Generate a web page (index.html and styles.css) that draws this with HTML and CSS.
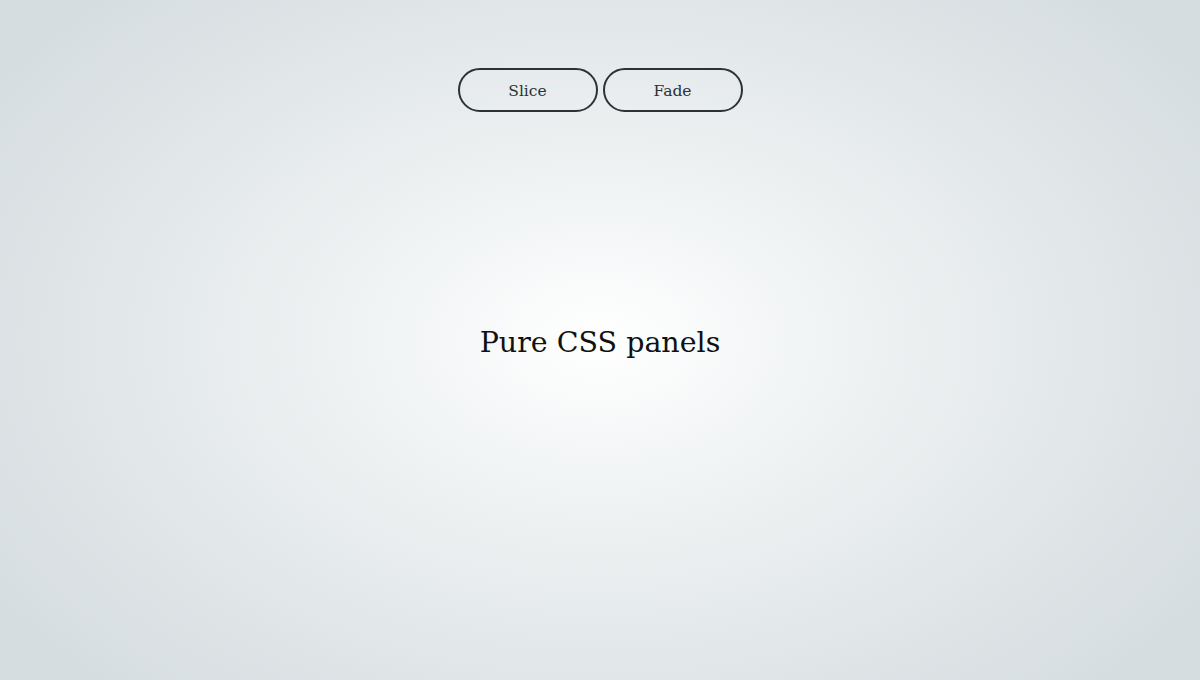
FILE: index.html
```html
<!DOCTYPE html>
<html lang="en">
<head>
<meta charset="utf-8">
<title>Pure CSS panels</title>
<link rel="stylesheet" href="styles.css">
</head>
<body>
<div class="page">
  <nav class="tabs">
    <button class="tab">Slice</button>
    <button class="tab">Fade</button>
  </nav>
  <main class="stage">
    <h1 class="title">Pure CSS panels</h1>
  </main>
</div>
</body>
</html>
```
FILE: styles.css
```css
html, body {
  margin: 0;
  padding: 0;
  height: 100%;
}
body {
  background: radial-gradient(ellipse 60% 70% at 50% 50%, #ffffff 0%, #f1f4f5 30%, #e3e8ea 65%, #d6dde0 100%);
  background-color: #dde3e6;
  font-family: "DejaVu Serif", "Liberation Serif", serif;
  color: #1d2427;
}
.page {
  width: 1200px;
  height: 680px;
  display: flex;
  flex-direction: column;
  align-items: center;
}
.tabs {
  display: flex;
  gap: 5px;
  margin-top: 68px;
}
.tab {
  width: 140px;
  height: 44px;
  border: 2px solid #2b3336;
  border-radius: 22px;
  background: transparent;
  font-family: "DejaVu Serif", "Liberation Serif", serif;
  font-size: 15.5px;
  color: #2b3336;
  padding: 2px 0 0 0;
  cursor: pointer;
}
.stage {
  flex: 1;
  display: flex;
  justify-content: center;
}
.title {
  margin: 214px 0 0 0;
  font-weight: 300;
  font-size: 28.5px;
  color: #111;
  font-family: "DejaVu Serif", "Liberation Serif", serif;
}
```
